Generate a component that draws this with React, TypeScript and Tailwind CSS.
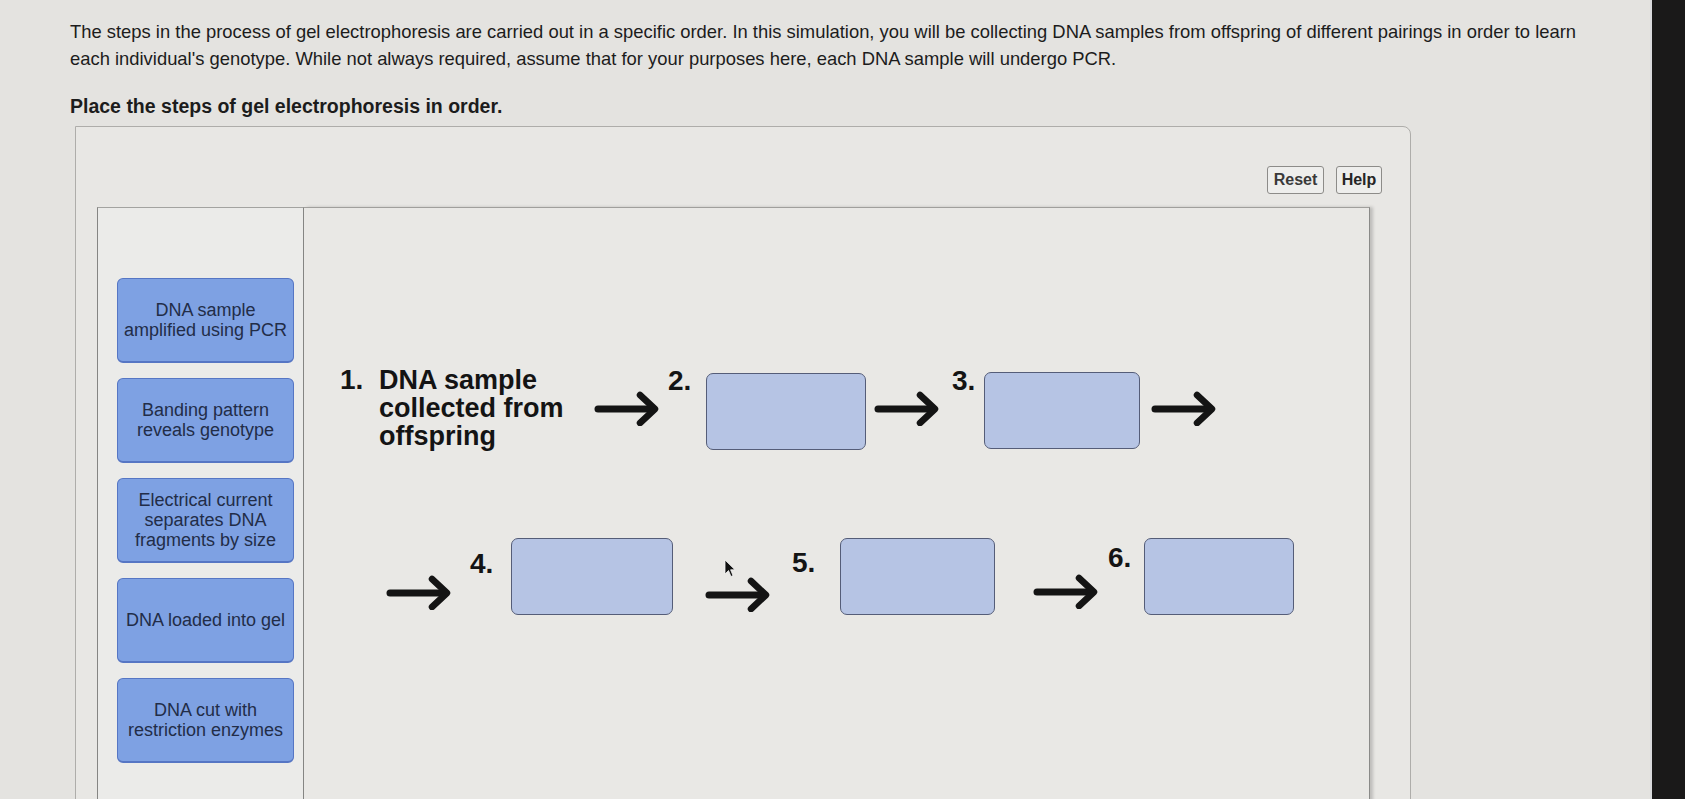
import type React from "react"

const cards = [
  "DNA sample\namplified using PCR",
  "Banding pattern\nreveals genotype",
  "Electrical current\nseparates DNA\nfragments by size",
  "DNA loaded into gel",
  "DNA cut with\nrestriction enzymes",
]

const Arrow: React.FC<{ className?: string }> = ({ className }) => (
  <svg className={className} width="68" height="36" viewBox="0 0 68 36" fill="none">
    <path d="M5 19 H59" stroke="#141414" strokeWidth="7" strokeLinecap="round" />
    <path
      d="M47 5 L62 19 L47 33"
      stroke="#141414"
      strokeWidth="6.5"
      strokeLinecap="round"
      strokeLinejoin="round"
    />
  </svg>
)

const Box: React.FC<{ w: string; className?: string }> = ({ w, className = "" }) => (
  <div
    className={`${w} ${className} h-[77px] shrink-0 rounded-[7px] border-[1.5px] border-[#555d78] bg-[#b6c4e4]`}
  />
)

const Num: React.FC<{ n: string; className?: string }> = ({ n, className = "" }) => (
  <span className={`${className} shrink-0 text-[28px] font-bold leading-[28px] text-[#141414]`}>{n}</span>
)

export default function App() {
  return (
    <div className="flex h-[799px] w-full overflow-hidden bg-[#e4e3e0] font-['Liberation_Sans',Arial,sans-serif] text-[#1c1c1c]">
      <div className="min-w-0 flex-1 pl-[70px] pt-[18px]">
        <p className="whitespace-nowrap text-[18.4px] leading-[27px]">
          The steps in the process of gel electrophoresis are carried out in a specific order. In this simulation, you
          will be collecting DNA samples from offspring of different pairings in order to learn
          <br />
          each individual's genotype. While not always required, assume that for your purposes here, each DNA sample
          will undergo PCR.
        </p>
        <p className="mt-[21px] text-[19.5px] font-bold leading-[27px]">Place the steps of gel electrophoresis in order.</p>

        {/* outer frame */}
        <div className="ml-[5px] mt-[6px] flex h-[700px] w-[1336px] flex-col rounded-tr-[8px] border border-[#aeadaa] bg-[#e8e7e4]">
          <div className="flex justify-end gap-[12px] pr-[28px] pt-[39px]">
            <button className="h-[28px] w-[57px] rounded-[3px] border border-[#8d8c89] bg-[#eeeeec] text-[16px] font-bold text-[#3a3a3a]">
              Reset
            </button>
            <button className="h-[28px] w-[46px] rounded-[3px] border border-[#8d8c89] bg-[#eeeeec] text-[16px] font-bold text-[#262626]">
              Help
            </button>
          </div>

          <div className="ml-[21px] mt-[13px] flex flex-1">
            {/* answer bank */}
            <div className="flex w-[207px] shrink-0 flex-col gap-[15px] border-x border-t border-x-[#858583] border-t-[#a3a3a0] bg-[#ebebe9] pl-[19px] pt-[70px]">
              {cards.map((c) => (
                <div
                  key={c}
                  className="flex h-[85px] w-[177px] items-center justify-center whitespace-pre-line rounded-[6px] border border-b-2 border-[#5676c4] bg-[#7ea1e3] text-center text-[18px] leading-[20px] text-[#222d48]"
                >
                  {c}
                </div>
              ))}
            </div>

            {/* drop area */}
            <div className="relative flex w-[1066px] flex-col border-r border-t border-r-[#8a8a88] border-t-[#a09f9c] bg-[#e9e8e5] shadow-[3px_0_3px_rgba(0,0,0,0.18)]">
              <div className="ml-[36px] mt-[158px] flex items-center">
                <div className="flex items-start">
                  <Num n="1." className="w-[39px]" />
                  <div className="w-[190px] text-[27px] font-bold leading-[28px] text-[#141414]">
                    DNA sample
                    <br />
                    collected from
                    <br />
                    offspring
                  </div>
                </div>
                <Arrow className="ml-[24px]" />
                <div className="ml-[7px] flex items-start">
                  <Num n="2." className="w-[38px]" />
                  <Box w="w-[160px]" className="mt-[6px]" />
                </div>
                <Arrow className="ml-[7px]" />
                <div className="ml-[11px] flex items-start">
                  <Num n="3." className="w-[32px]" />
                  <Box w="w-[156px]" className="mt-[5px]" />
                </div>
                <Arrow className="ml-[10px]" />
              </div>

              <div className="ml-[81px] mt-[88px] flex items-start">
                <Arrow className="mt-[36px]" />
                <Num n="4." className="ml-[17px] mt-[12px] w-[41px]" />
                <Box w="w-[162px]" />
                <Arrow className="ml-[31px] mt-[38px]" />
                <Num n="5." className="ml-[20px] mt-[11px] w-[48px]" />
                <Box w="w-[155px]" />
                <Arrow className="ml-[37px] mt-[35px]" />
                <Num n="6." className="ml-[8px] mt-[6px] w-[36px]" />
                <Box w="w-[150px]" />
              </div>

              {/* mouse pointer */}
              <svg className="absolute left-[420px] top-[351px]" width="12" height="19" viewBox="0 0 12 19">
                <path d="M1 1 L1 15 L4.5 11.5 L7 17.5 L9 16.6 L6.6 10.8 L11 10.8 Z" fill="#111" stroke="#f4f4f4" strokeWidth="0.8" />
              </svg>
            </div>
          </div>
        </div>
      </div>
      <div className="w-[2px] shrink-0 bg-[#d9dadc]" />
      <div className="w-[33px] shrink-0 bg-[#1a1919]" />
    </div>
  )
}
